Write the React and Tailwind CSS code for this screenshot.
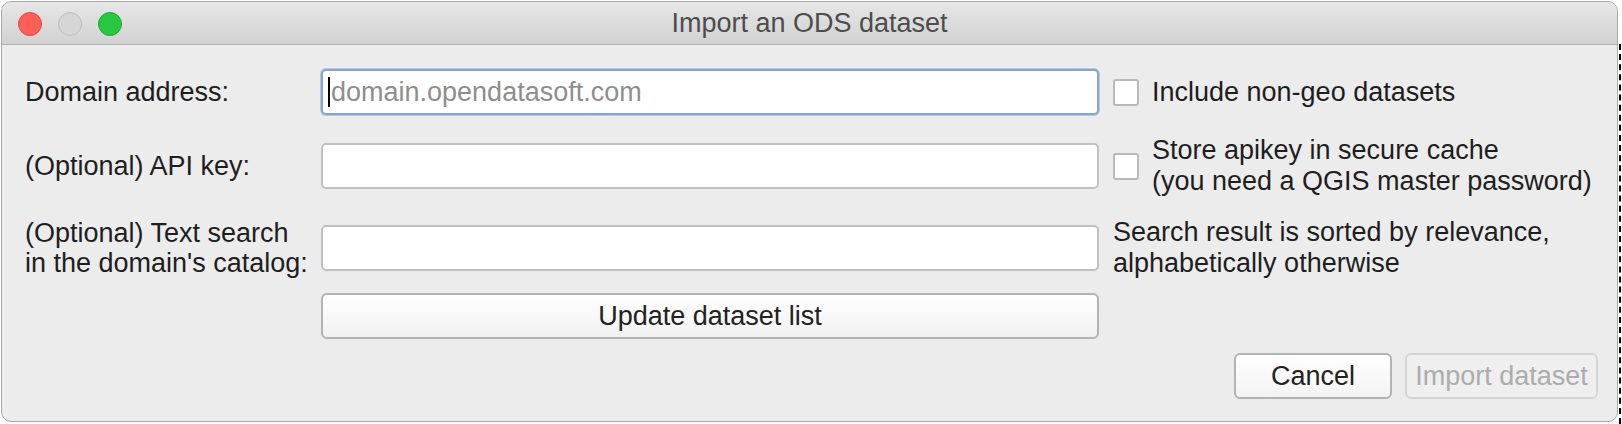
export default function App() {
  return (
    <div className="w-[1622px] h-[424px] bg-white flex font-['Liberation_Sans',Arial,sans-serif] overflow-hidden">
      <div className="ml-[1px] mt-[1px] w-[1617px] h-[421px] flex flex-col rounded-[10px] border border-[#a9a9a9] bg-[#ececec] overflow-hidden">
        <TitleBar />
        <div className="flex flex-col pt-[24px] pl-[23px] pr-[19px] pb-[22px] text-[27px] text-[#1e1e1e]">
          <div className="flex items-center h-[46px]">
            <span className="w-[296px] leading-[31px]">Domain address:</span>
            <div className="w-[778px] h-[46px] bg-white border-2 border-[#86a6cf] rounded-[5px] shadow-[0_0_0_1px_#b3c8e3] flex items-center pl-[5px]">
              <span className="w-[2px] h-[30px] bg-black"></span>
              <span className="ml-[1px] text-[#8e8e8e] leading-[31px]">domain.opendatasoft.com</span>
            </div>
            <div className="ml-[14px] flex items-center gap-[13px]">
              <Checkbox />
              <span className="leading-[31px]">Include non-geo datasets</span>
            </div>
          </div>

          <div className="flex items-center h-[46px] mt-[28px]">
            <span className="w-[296px] leading-[31px]">(Optional) API key:</span>
            <TextInput />
            <div className="ml-[14px] flex items-center gap-[13px]">
              <Checkbox />
              <span className="leading-[31px]">
                Store apikey in secure cache
                <br />
                (you need a QGIS master password)
              </span>
            </div>
          </div>

          <div className="flex items-center h-[46px] mt-[36px]">
            <span className="w-[296px] leading-[30px]">
              (Optional) Text search
              <br />
              in the domain's catalog:
            </span>
            <TextInput />
            <span className="ml-[14px] leading-[31px]">
              Search result is sorted by relevance,
              <br />
              alphabetically otherwise
            </span>
          </div>

          <div className="flex mt-[22px]">
            <button className="ml-[296px] w-[778px] h-[46px] rounded-[6px] border-2 border-[#b3b3b3] bg-gradient-to-b from-white to-[#f1f1f1] text-[#222]">
              Update dataset list
            </button>
          </div>

          <div className="flex justify-end gap-[13px] mt-[14px]">
            <button className="w-[158px] h-[46px] rounded-[6px] border-2 border-[#b3b3b3] bg-gradient-to-b from-white to-[#f3f3f3] text-[#222]">
              Cancel
            </button>
            <button
              disabled
              className="w-[193px] h-[46px] rounded-[6px] border-2 border-[#d6d6d6] bg-[#efefef] text-[#acacac]"
            >
              Import dataset
            </button>
          </div>
        </div>
      </div>
      <div className="ml-[1px] mt-[44px] h-[380px] border-l-2 border-dashed border-black"></div>
    </div>
  );
}

function TitleBar() {
  return (
    <div className="relative h-[43px] shrink-0 border-b border-[#b4b4b4] bg-gradient-to-b from-[#e7e7e7] to-[#d2d2d2] flex items-center justify-center">
      <div className="absolute left-[16px] top-[10px] flex gap-[16px]">
        <span className="w-[24px] h-[24px] rounded-full bg-[#fe5f57] border border-[#e2463f]"></span>
        <span className="w-[24px] h-[24px] rounded-full bg-[#d6d6d6] border border-[#bdbdbd]"></span>
        <span className="w-[24px] h-[24px] rounded-full bg-[#28c840] border border-[#1ea532]"></span>
      </div>
      <span className="text-[27px] text-[#4d4d4d]">Import an ODS dataset</span>
    </div>
  );
}

function TextInput() {
  return <div className="w-[778px] h-[46px] bg-white border-2 border-[#c0c0c0] rounded-[5px]"></div>;
}

function Checkbox() {
  return <span className="w-[26px] h-[27px] bg-white border-2 border-[#b9b9b9] rounded-[3px] shrink-0"></span>;
}
